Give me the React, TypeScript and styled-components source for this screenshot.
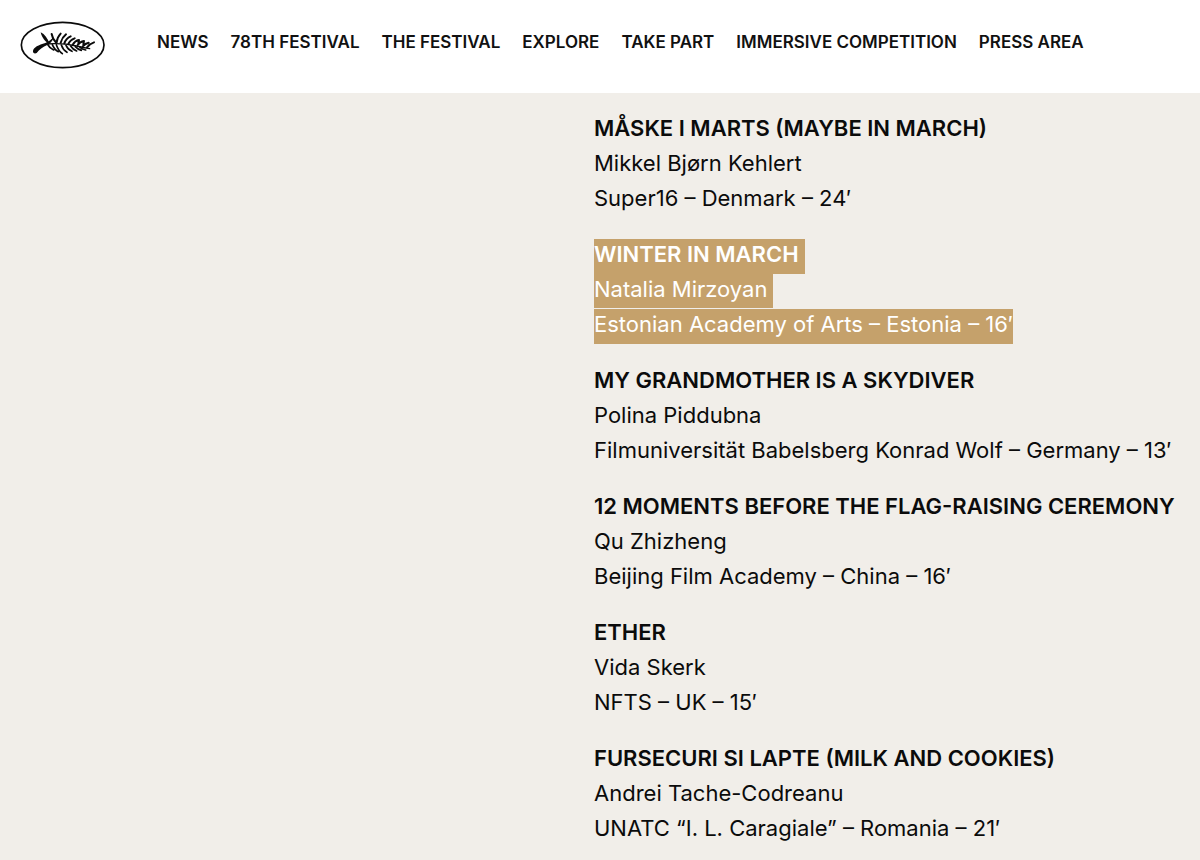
import React from "react";
import styled, { createGlobalStyle } from "styled-components";

const GlobalStyle = createGlobalStyle`
  * { box-sizing: border-box; }
  body {
    margin: 0;
    background: #f1eee9;
    color: #0b0b0b;
    font-family: Inter, "Liberation Sans", sans-serif;
  }
`;

const Header = styled.header`
  display: flex;
  align-items: flex-start;
  min-height: 93px;
  padding: 21px 20px;
  background: #fff;
`;

const LogoLink = styled.a`
  display: block;
  flex: none;
  margin-right: 51px;
  color: #0b0b0b;
  line-height: 0;
`;

const Nav = styled.nav`
  display: flex;
  gap: 22px;
  padding-top: 9px;
`;

const NavLink = styled.a`
  color: #111;
  font-size: 17px;
  font-weight: 600;
  line-height: 24px;
  text-decoration: none;
  white-space: nowrap;
`;

const Main = styled.main`
  padding: 20px 0 0 49.5%;
`;

const Film = styled.article`
  margin-bottom: 21px;
`;

const Line = styled.p`
  margin: 0;
  font-size: 22px;
  line-height: 31px;
  white-space: nowrap;
`;

const Title = styled(Line).attrs({ as: "h2" })`
  font-weight: 600;
`;

const Text = styled.span`
  display: block;
  width: fit-content;
  padding-bottom: 4px;
`;

const Highlight = styled(Text).attrs({ as: "mark" })<{ $tail?: boolean; $divided?: boolean }>`
  padding-right: ${({ $tail }) => ($tail ? "6px" : "0")};
  padding-bottom: ${({ $divided }) => ($divided ? "3px" : "4px")};
  border-bottom: ${({ $divided }) => ($divided ? "1px solid #f1eee9" : "0")};
  background: #c5a16b;
  color: #fff;
`;

const links = [
  "NEWS",
  "78TH FESTIVAL",
  "THE FESTIVAL",
  "EXPLORE",
  "TAKE PART",
  "IMMERSIVE COMPETITION",
  "PRESS AREA",
];

interface FilmEntry {
  title: string;
  director: string;
  school: string;
  selected?: boolean;
}

const films: FilmEntry[] = [
  { title: "MÅSKE I MARTS (MAYBE IN MARCH)", director: "Mikkel Bjørn Kehlert", school: "Super16 – Denmark – 24′" },
  { title: "WINTER IN MARCH", director: "Natalia Mirzoyan", school: "Estonian Academy of Arts – Estonia – 16′", selected: true },
  { title: "MY GRANDMOTHER IS A SKYDIVER", director: "Polina Piddubna", school: "Filmuniversität Babelsberg Konrad Wolf – Germany – 13′" },
  { title: "12 MOMENTS BEFORE THE FLAG-RAISING CEREMONY", director: "Qu Zhizheng", school: "Beijing Film Academy – China – 16′" },
  { title: "ETHER", director: "Vida Skerk", school: "NFTS – UK – 15′" },
  { title: "FURSECURI SI LAPTE (MILK AND COOKIES)", director: "Andrei Tache-Codreanu", school: "UNATC “I. L. Caragiale” – Romania – 21′" },
];

function PalmLogo() {
  return (
    <svg width="86" height="48" viewBox="30 32 258 144" fill="none" stroke="currentColor" strokeLinecap="round">
      <ellipse cx="158" cy="104" rx="124" ry="68" strokeWidth="5" />
      <path d="M69 122C70 111 86 104 106 98C116 94 124 88 131 80C128 93 120 101 110 105C98 110 88 118 80 128C74 131 68 128 69 122Z" fill="currentColor" stroke="none" />
      <path d="M92 66C104 72 113 84 119 101C107 96 95 82 92 66Z" fill="currentColor" stroke="none" />
      <path strokeWidth="4" d="M108 101Q155 97 200 107Q220 112 239 115" />
      <path
        strokeWidth="6"
        d="M125 71Q127 84 137 95M152 70Q142 80 140 96M168 72Q156 82 152 97M182 78Q168 84 163 99M194 84Q180 89 175 101M207 89Q195 91 188 103M222 92Q210 94 203 104M207 89L205 99M222 92L220 102M236 97Q226 99 218 108M252 96Q240 100 231 111"
      />
      <path
        strokeWidth="5"
        d="M112 101Q119 114 131 119M127 103Q133 118 145 124M139 103Q145 121 157 130M154 104Q159 119 171 126M168 105Q174 118 186 123M182 107Q188 117 200 122M196 109Q203 117 214 120M210 111Q217 117 227 119"
      />
    </svg>
  );
}

export default function App() {
  return (
    <>
      <GlobalStyle />
      <Header>
        <LogoLink href="#" aria-label="Home">
          <PalmLogo />
        </LogoLink>
        <Nav>
          {links.map((label) => (
            <NavLink href="#" key={label}>{label}</NavLink>
          ))}
        </Nav>
      </Header>
      <Main>
        {films.map(({ title, director, school, selected }) => (
          <Film key={title}>
            <Title>{selected ? <Highlight $tail>{title}</Highlight> : <Text>{title}</Text>}</Title>
            <Line>{selected ? <Highlight $tail $divided>{director}</Highlight> : <Text>{director}</Text>}</Line>
            <Line>{selected ? <Highlight>{school}</Highlight> : <Text>{school}</Text>}</Line>
          </Film>
        ))}
      </Main>
    </>
  );
}
